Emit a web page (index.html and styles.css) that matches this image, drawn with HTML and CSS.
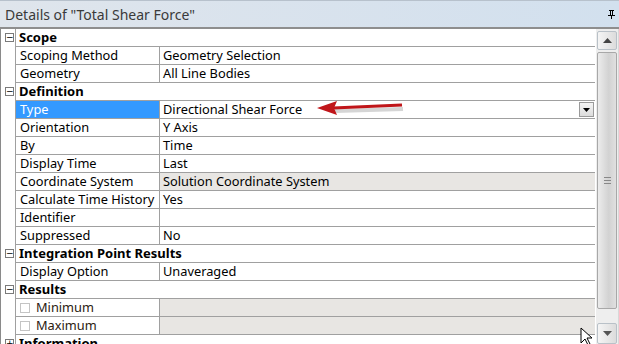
FILE: index.html
```html
<!DOCTYPE html>
<html>
<head>
<meta charset="utf-8">
<link rel="stylesheet" href="styles.css">
</head>
<body>
<div class="panel">
  <div class="titlebar">
    <span class="title">Details of "Total Shear Force"</span>
    <svg class="pin" width="7" height="9" viewBox="0 0 7 9"><path d="M1 0h5v1h-1v4h2v1H4v3H3V6H0V5h2V1H1z M3 1v4h1V1z" fill="#000"/></svg>
  </div>
  <div class="body">
    <div class="grid">
      <div class="row head"><div class="gut"><span class="box">−</span></div><div class="hcell">Scope</div></div>
      <div class="row"><div class="gut"></div><div class="lab">Scoping Method</div><div class="val">Geometry Selection</div></div>
      <div class="row"><div class="gut"></div><div class="lab">Geometry</div><div class="val">All Line Bodies</div></div>
      <div class="row head"><div class="gut"><span class="box">−</span></div><div class="hcell">Definition</div></div>
      <div class="row"><div class="gut"></div><div class="lab sel">Type</div><div class="val drop">Directional Shear Force<span class="dbtn"><svg width="7" height="4" viewBox="0 0 7 4"><path d="M0 0h7L3.5 4z" fill="#000"/></svg></span></div></div>
      <div class="row"><div class="gut"></div><div class="lab">Orientation</div><div class="val">Y Axis</div></div>
      <div class="row"><div class="gut"></div><div class="lab">By</div><div class="val">Time</div></div>
      <div class="row"><div class="gut"></div><div class="lab">Display Time</div><div class="val">Last</div></div>
      <div class="row"><div class="gut"></div><div class="lab">Coordinate System</div><div class="val ro">Solution Coordinate System</div></div>
      <div class="row"><div class="gut"></div><div class="lab">Calculate Time History</div><div class="val">Yes</div></div>
      <div class="row"><div class="gut"></div><div class="lab">Identifier</div><div class="val"></div></div>
      <div class="row"><div class="gut"></div><div class="lab">Suppressed</div><div class="val">No</div></div>
      <div class="row head"><div class="gut"><span class="box">−</span></div><div class="hcell">Integration Point Results</div></div>
      <div class="row"><div class="gut"></div><div class="lab">Display Option</div><div class="val">Unaveraged</div></div>
      <div class="row head"><div class="gut"><span class="box">−</span></div><div class="hcell">Results</div></div>
      <div class="row"><div class="gut"></div><div class="lab chk"><span class="cb"></span>Minimum</div><div class="val ro"></div></div>
      <div class="row"><div class="gut"></div><div class="lab chk"><span class="cb"></span>Maximum</div><div class="val ro"></div></div>
      <div class="row head"><div class="gut"><span class="box">+</span></div><div class="hcell">Information</div></div>
    </div>
    <div class="scroll">
      <div class="sbtn up"><svg width="9" height="5" viewBox="0 0 9 5"><path d="M4.5 0L9 5H0z" fill="#444"/></svg></div>
      <div class="thumb"><span class="grip"></span></div>
      <div class="track"></div>
      <div class="sbtn down"><svg width="9" height="5" viewBox="0 0 9 5"><path d="M0 0h9L4.5 5z" fill="#555"/></svg></div>
    </div>
  </div>
  <svg class="arrow" width="100" height="20" viewBox="0 0 100 20">
    <path d="M20 11 L88 9" stroke="#888" stroke-opacity="0.35" stroke-width="4" fill="none"/>
    <path d="M18 8 L87 5" stroke="#c0161a" stroke-width="3" fill="none"/>
    <path d="M2 8 L22 1 L19 8 L22 15 Z" fill="#c0161a"/>
  </svg>
  <svg class="cursor" width="16" height="18" viewBox="0 0 16 18"><path d="M1 1 L1 16 L5 12 L8 18 L10 17 L7 11 L12 11 Z" fill="#fff" stroke="#000" stroke-width="1"/></svg>
</div>
</body>
</html>
```
FILE: styles.css
```css
html, body { margin: 0; padding: 0; background: #fff; }
body { width: 619px; height: 344px; overflow: hidden; font-family: "Noto Sans", "Open Sans", sans-serif; font-size: 12.8px; color: #000; }
.panel { position: relative; width: 619px; height: 344px; overflow: hidden; }
.titlebar { height: 26px; border-top: 1px solid #b7c1cc; border-bottom: 2px solid #8e8e8e; background: linear-gradient(to right, #dfe5ec, #d2e0ee); display: flex; align-items: center; justify-content: space-between; padding: 0 4px 0 5px; }
.title { font-size: 14px; color: #3a3a3a; }
.pin { margin-top: 1px; }
.body { display: flex; height: 315px; }
.grid { width: 595px; border-left: 1px solid #8a8a8a; box-sizing: border-box; display: flex; flex-direction: column; }
.row { display: flex; height: 18px; flex: none; }
.gut { width: 15px; flex: none; border-right: 1px solid #a0a0a0; box-sizing: border-box; position: relative; }
.box { position: absolute; left: 4px; top: 4px; width: 7px; height: 7px; border: 1px solid #7a7a7a; font-size: 9px; line-height: 6px; text-align: center; color: #000; font-family: "DejaVu Sans", sans-serif; }
.lab, .val, .hcell { border-bottom: 1px solid #a0a0a0; box-sizing: border-box; height: 18px; line-height: 17px; white-space: nowrap; overflow: hidden; }
.lab { width: 144px; flex: none; padding-left: 4px; border-right: 1px solid #a0a0a0; }
.val { flex: 1; padding-left: 3px; position: relative; }
.hcell { flex: 1; font-weight: bold; padding-left: 3px; font-size: 13px; }
.sel { background: #3399ff; color: #fff; }
.ro { background: #e8e6e3; }
.chk { display: flex; align-items: center; color: #2a2010; }
.cb { width: 10px; height: 10px; border: 1px solid #c4c4c4; box-sizing: border-box; margin-right: 6px; background: #fff; }
.dbtn { position: absolute; right: 1px; top: 1px; width: 15px; height: 15px; background: linear-gradient(#f4f4f4, #dcdcdc); border: 1px solid #9a9a9a; box-sizing: border-box; display: flex; align-items: center; justify-content: center; }
.scroll { width: 22px; margin-left: 1px; display: flex; flex-direction: column; background: #eeeeee; border-right: 1px solid #d8d8d8; }
.sbtn { height: 19px; margin: 2px 1px 0; border: 1px solid #b9c1c8; border-radius: 2px; background: linear-gradient(to right, #f5f5f5, #dcdcdc); display: flex; align-items: center; justify-content: center; box-sizing: border-box; flex: none; }
.sbtn.down { margin: 0 1px; height: 21px; }
.thumb { height: 257px; margin: 2px 1px 0; border: 1px solid #a8a8a8; border-radius: 2px; background: linear-gradient(to right, #ececec, #d2d2d2 60%, #e0e0e0); box-sizing: border-box; flex: none; display: flex; align-items: center; justify-content: center; }
.grip { width: 7px; height: 5px; border-top: 1px solid #888; border-bottom: 1px solid #888; position: relative; }
.grip::after { content: ""; position: absolute; left: 0; right: 0; top: 2px; border-top: 1px solid #888; }
.track { flex: 1; }
.arrow { position: absolute; left: 315px; top: 100px; }
.cursor { position: absolute; left: 580px; top: 327px; }
```
